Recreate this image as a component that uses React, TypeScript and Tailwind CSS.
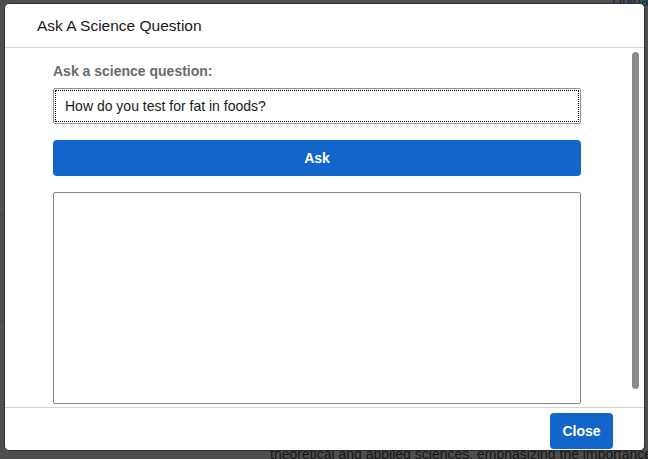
const App = () => {
  return (
    <div className="relative w-[648px] h-[459px] overflow-hidden bg-[#4e4e4e] font-['Liberation_Sans',Arial,sans-serif]">
      {/* dimmed page behind the modal */}
      <div className="flex flex-col h-full">
        <div className="h-[20px] border-b border-[#444]" />
        <div className="h-[196px] border-b border-[#444]" />
        <div className="h-[105px] border-b border-[#444]" />
        <div className="flex-1 flex flex-col justify-end pl-[270px]">
          <div className="text-[14px] leading-[18px] text-[#161616] whitespace-nowrap translate-y-[4px]">
            theoretical and applied sciences, emphasizing the importance
          </div>
        </div>
      </div>
      <div className="absolute left-[612px] top-[-9px] text-[14px] text-[#0e2a4d]">Upload</div>

      {/* modal */}
      <div className="absolute left-[4px] top-[3px] w-[641px] h-[448px] bg-white rounded-[5px] border border-[#2f2f2f] flex flex-col overflow-hidden">
        <div className="h-[44px] shrink-0 flex items-center pl-[32px] border-b border-[#d8d8d8]">
          <span className="text-[15.5px] text-[#181818] pt-[1px]">Ask A Science Question</span>
        </div>

        <div className="flex-1 flex min-h-0">
          <div className="flex-1 flex flex-col pl-[48px] pr-[51px] pt-[13px]">
            <label className="text-[14px] leading-[20px] font-bold text-[#6b6b6b]">Ask a science question:</label>
            <div className="mt-[7px] h-[36px] border border-[#8f8f8f] rounded-[2px] p-[1px]">
              <div className="h-full border border-dotted border-black flex items-center pl-[9px]">
                <span className="text-[14px] text-[#1a1a1a]">How do you test for fat in foods?</span>
              </div>
            </div>
            <button className="mt-[16px] h-[36px] w-full rounded-[4px] bg-[#1366c9] text-white text-[14px] font-bold">
              Ask
            </button>
            <div className="mt-[16px] h-[212px] border border-[#7e8792] rounded-[2px]" />
          </div>
          <div className="w-[12px] shrink-0 pt-[4px] pb-[18px] pr-[3px] flex justify-start">
            <div className="w-[7px] h-full rounded-full bg-[#8b8b8b]" />
          </div>
        </div>

        <div className="h-[43px] shrink-0 border-t border-[#d4d4d4] flex items-start justify-end pr-[31px] pt-[5px]">
          <button className="w-[63px] h-[36px] rounded-[4px] bg-[#1366c9] text-white text-[14px] font-bold">
            Close
          </button>
        </div>
      </div>
    </div>
  );
};

export default App;
